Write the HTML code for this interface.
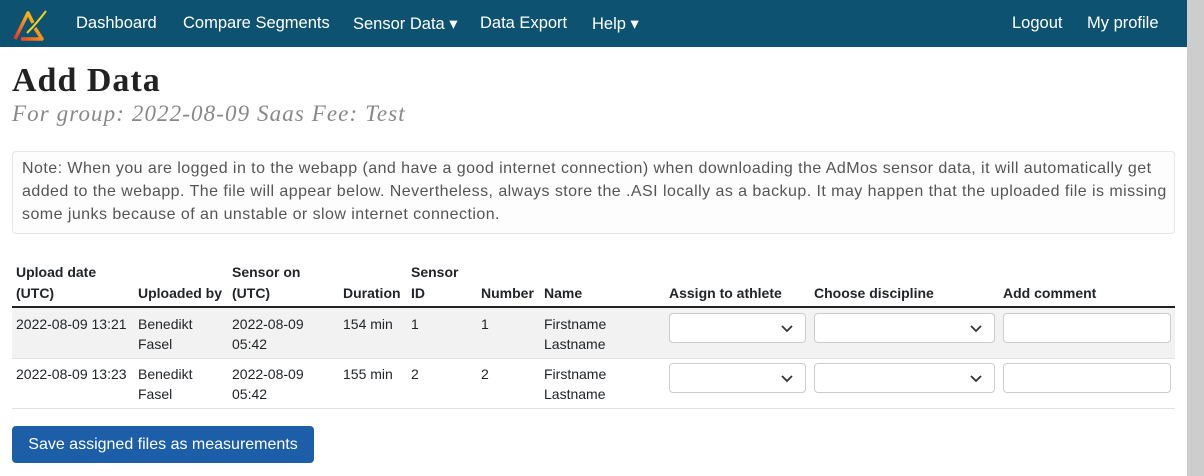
<!DOCTYPE html>
<html><head><style>
*{box-sizing:border-box;margin:0;padding:0}
body{width:1204px;height:476px;overflow:hidden;background:#fff;font-family:"Liberation Sans",sans-serif;color:#212529;position:relative;font-size:14px}
.nav{position:absolute;left:0;top:0;width:1187px;height:47px;background:#0d5270;color:#fff;font-size:16.5px}
.nav span{position:absolute;top:14px}
.sb{position:absolute;left:1187px;top:0;width:17px;height:476px;background:#cdcdcd}
.a{position:absolute}
h1{position:absolute;left:12px;top:62px;font-family:"Liberation Serif",serif;font-size:34px;font-weight:bold;color:#222;letter-spacing:1px}
.sub{position:absolute;left:12px;top:101px;font-family:"Liberation Serif",serif;font-style:italic;font-size:23px;color:#888;letter-spacing:1.1px}
.note{position:absolute;left:12px;top:151px;width:1163px;height:83px;border:1px solid #e6e6e6;border-radius:4px;background:#fdfdfd;color:#555;font-size:16px;letter-spacing:0.45px;line-height:23px;padding:5px 9px;white-space:nowrap}
.th{position:absolute;font-weight:bold;font-size:14px;line-height:21px}
.td{position:absolute;font-size:14px;line-height:20px}
.sel{position:absolute;height:30px;border:1px solid #ccc;border-radius:4px;background:#fff}
.sel svg{position:absolute;right:12px;top:11px}
</style></head><body>
<div class="nav">
<svg class="a" style="left:13px;top:7px" width="36" height="34" viewBox="0 0 36 34"><defs><linearGradient id="g" x1="0" y1="1" x2="1" y2="0"><stop offset="0" stop-color="#e8332a"/><stop offset="0.6" stop-color="#f7a11a"/><stop offset="1" stop-color="#f5d31c"/></linearGradient></defs><path d="M2 32 L15 6 L20 16 M22 21 L29 32 L8 32" fill="none" stroke="url(#g)" stroke-width="3.5" stroke-linejoin="round"/><path d="M14 26 Q24 16 33 4" fill="none" stroke="#f5d31c" stroke-width="2"/></svg>
<span style="left:76px">Dashboard</span>
<span style="left:183px">Compare Segments</span>
<span style="left:353px">Sensor Data ▾</span>
<span style="left:480px">Data Export</span>
<span style="left:592px">Help ▾</span>
<span style="left:1012px">Logout</span>
<span style="left:1087px">My profile</span>
</div>
<div class="sb"></div>
<h1>Add Data</h1>
<div class="sub">For group: 2022-08-09 Saas Fee: Test</div>
<div class="note">Note: When you are logged in to the webapp (and have a good internet connection) when downloading the AdMos sensor data, it will automatically get<br>added to the webapp. The file will appear below. Nevertheless, always store the .ASI locally as a backup. It may happen that the uploaded file is missing<br>some junks because of an unstable or slow internet connection.</div>
<div class="th" style="left:16px;top:262px">Upload date<br>(UTC)</div>
<div class="th" style="left:138px;top:283px">Uploaded by</div>
<div class="th" style="left:232px;top:262px">Sensor on<br>(UTC)</div>
<div class="th" style="left:343px;top:283px">Duration</div>
<div class="th" style="left:411px;top:262px">Sensor<br>ID</div>
<div class="th" style="left:481px;top:283px">Number</div>
<div class="th" style="left:544px;top:283px">Name</div>
<div class="th" style="left:669px;top:283px">Assign to athlete</div>
<div class="th" style="left:814px;top:283px">Choose discipline</div>
<div class="th" style="left:1003px;top:283px">Add comment</div>
<div class="a" style="left:12px;top:306px;width:1163px;height:2px;background:#222"></div>
<div class="a" style="left:12px;top:308px;width:1163px;height:50px;background:#f2f2f2"></div>
<div class="a" style="left:12px;top:358px;width:1163px;height:1px;background:#dee2e6"></div>
<div class="a" style="left:12px;top:408px;width:1163px;height:1px;background:#dee2e6"></div>
<div class="td" style="left:16px;top:314px">2022-08-09 13:21</div>
<div class="td" style="left:138px;top:314px">Benedikt<br>Fasel</div>
<div class="td" style="left:232px;top:314px">2022-08-09<br>05:42</div>
<div class="td" style="left:343px;top:314px">154 min</div>
<div class="td" style="left:411px;top:314px">1</div>
<div class="td" style="left:481px;top:314px">1</div>
<div class="td" style="left:544px;top:314px">Firstname<br>Lastname</div>
<div class="td" style="left:16px;top:364px">2022-08-09 13:23</div>
<div class="td" style="left:138px;top:364px">Benedikt<br>Fasel</div>
<div class="td" style="left:232px;top:364px">2022-08-09<br>05:42</div>
<div class="td" style="left:343px;top:364px">155 min</div>
<div class="td" style="left:411px;top:364px">2</div>
<div class="td" style="left:481px;top:364px">2</div>
<div class="td" style="left:544px;top:364px">Firstname<br>Lastname</div>
<div class="sel" style="left:669px;top:313px;width:137px"><svg width="12" height="8"><path d="M1 1 L6 6 L11 1" fill="none" stroke="#333" stroke-width="1.8"/></svg></div>
<div class="sel" style="left:814px;top:313px;width:181px"><svg width="12" height="8"><path d="M1 1 L6 6 L11 1" fill="none" stroke="#333" stroke-width="1.8"/></svg></div>
<div class="sel" style="left:1003px;top:313px;width:168px"></div>
<div class="sel" style="left:669px;top:363px;width:137px"><svg width="12" height="8"><path d="M1 1 L6 6 L11 1" fill="none" stroke="#333" stroke-width="1.8"/></svg></div>
<div class="sel" style="left:814px;top:363px;width:181px"><svg width="12" height="8"><path d="M1 1 L6 6 L11 1" fill="none" stroke="#333" stroke-width="1.8"/></svg></div>
<div class="sel" style="left:1003px;top:363px;width:168px"></div>
<div class="a" style="left:12px;top:426px;width:302px;height:37px;background:#1c5ea8;border-radius:4px;color:#fff;font-size:16px;line-height:37px;text-align:center">Save assigned files as measurements</div>
</body></html>
